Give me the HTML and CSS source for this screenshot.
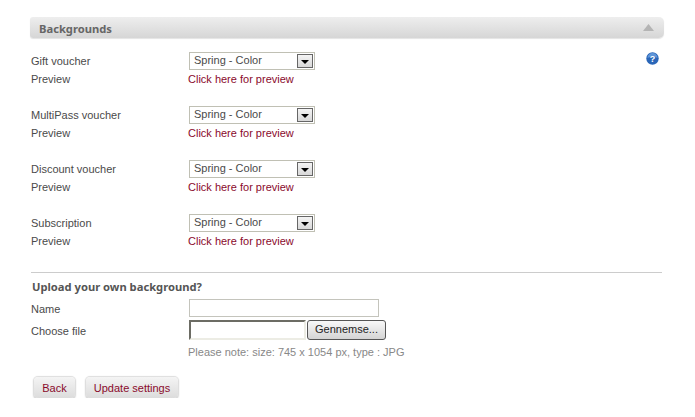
FILE: index.html
```html
<!DOCTYPE html>
<html>
  <head>
    <meta charset="UTF-8">
    <title>Backgrounds</title>
    <link rel="stylesheet" href="styles.css">
  </head>
  <body>
    <div class="section-head">
      <span>Backgrounds</span>
      <svg class="collapse" width="11" height="7" viewBox="0 0 11 7"><path d="M5.5 0 L11 7 L0 7 Z" fill="#b4b4b4"/></svg>
    </div>
    <div class="vouchers">
      <svg class="help" width="13" height="13" viewBox="0 0 13 13">
        <circle cx="6.5" cy="6.5" r="6.2" fill="#2a66b8"/>
        <path d="M1.5 6 A5 5 0 0 1 11.5 6 Q6.5 3.5 1.5 6 Z" fill="#5f95d8"/>
        <text x="6.5" y="10" text-anchor="middle" class="help-mark">?</text>
      </svg>
      <div class="voucher">
        <label>Gift voucher</label>
        <div class="fake-select"><span>Spring - Color</span><i class="arrow"></i></div>
        <label>Preview</label>
        <a href="#">Click here for preview</a>
      </div>
      <div class="voucher">
        <label>MultiPass voucher</label>
        <div class="fake-select"><span>Spring - Color</span><i class="arrow"></i></div>
        <label>Preview</label>
        <a href="#">Click here for preview</a>
      </div>
      <div class="voucher">
        <label>Discount voucher</label>
        <div class="fake-select"><span>Spring - Color</span><i class="arrow"></i></div>
        <label>Preview</label>
        <a href="#">Click here for preview</a>
      </div>
      <div class="voucher">
        <label>Subscription</label>
        <div class="fake-select"><span>Spring - Color</span><i class="arrow"></i></div>
        <label>Preview</label>
        <a href="#">Click here for preview</a>
      </div>
    </div>
    <hr>
    <h3>Upload your own background?</h3>
    <div class="upload">
      <label class="name-label">Name</label>
      <div class="text-input"></div>
      <label class="file-label">Choose file</label>
      <div class="file-row">
        <div class="file-input"></div>
        <div class="browse">Gennemse...</div>
      </div>
      <div></div>
      <p class="note">Please note: size: 745 x 1054 px, type : JPG</p>
    </div>
    <div class="actions">
      <a class="btn btn-back" href="#">Back</a>
      <a class="btn btn-update" href="#">Update settings</a>
    </div>
  </body>
</html>
```

FILE: styles.css
```css
body {
    margin: 0;
    padding: 17px 31px 0 30px;
    background: #fff;
    font-family: "Liberation Sans", sans-serif;
    font-size: 11px;
    color: #4a4a4a;
}
.section-head {
    height: 21px;
    display: flex;
    align-items: center;
    justify-content: space-between;
    padding: 0 10px 0 9px;
    border-radius: 3px 5px 5px 3px;
    background: linear-gradient(#eeeeee, #d6d6d6);
    box-shadow: 0 1px 1px #e4e4e4;
    color: #666;
    font-family: "Noto Sans", sans-serif;
    font-weight: bold;
    font-size: 11.2px;
}
.section-head span {
    padding-top: 2px;
}
.vouchers {
    position: relative;
    padding: 14px 0 0 1px;
}
.help {
    position: absolute;
    top: 14px;
    right: 5px;
}
.help-mark {
    font-family: "Liberation Sans", sans-serif;
    font-size: 9px;
    font-weight: bold;
    fill: #fff;
}
.voucher {
    display: grid;
    grid-template-columns: 158px 1fr;
    grid-auto-rows: 18px;
    align-items: center;
    margin-bottom: 18px;
}
.voucher a {
    color: #8a0a2c;
    text-decoration: none;
    margin-left: -1px;
}
.fake-select {
    width: 126px;
    height: 18px;
    box-sizing: border-box;
    border: 1px solid #c0c0b4;
    display: flex;
    align-items: center;
    justify-content: space-between;
    padding: 0 1px 0 4px;
}
.fake-select span {
    padding-bottom: 2px;
}
.arrow {
    width: 16px;
    height: 14px;
    box-sizing: border-box;
    border: 1px solid #666;
    background: linear-gradient(#f4f4f4, #d8d8d8);
    display: flex;
    align-items: center;
    justify-content: center;
}
.arrow::after {
    content: "";
    margin-top: 2px;
    border-top: 4px solid #000;
    border-left: 4px solid transparent;
    border-right: 4px solid transparent;
}
hr {
    margin: 22px 2px 0 1px;
    border: 0;
    border-top: 1px solid #cccccc;
}
h3 {
    margin: 6px 0 0 2px;
    font-family: "Noto Sans", sans-serif;
    font-size: 11.2px;
    line-height: 15px;
    color: #555;
}
.upload {
    display: grid;
    grid-template-columns: 158px 1fr;
    align-items: center;
    margin: 5px 0 0 1px;
}
.text-input {
    width: 190px;
    height: 18px;
    box-sizing: border-box;
    border: 1px solid #c4c4bc;
}
.name-label {
    padding-top: 2px;
}
.file-label {
    margin-top: 4px;
}
.file-row {
    display: flex;
    align-items: center;
    margin-top: 3px;
}
.file-input {
    width: 117px;
    height: 20px;
    box-sizing: border-box;
    border: 2px solid;
    border-color: #6c6c64 #ecece4 #ecece4 #6c6c64;
}
.browse {
    width: 79px;
    height: 20px;
    margin-left: 1px;
    box-sizing: border-box;
    border: 1px solid #555;
    border-radius: 3px;
    background: linear-gradient(#f8f8f8, #d4d4d4);
    color: #222;
    text-align: center;
    line-height: 17px;
}
.note {
    margin: 3px 0 0 -1px;
    color: #888;
    line-height: 18px;
}
.actions {
    display: flex;
    gap: 11px;
    margin: 16px 0 0 4px;
}
.btn {
    height: 21px;
    line-height: 22px;
    box-sizing: border-box;
    text-align: center;
    border-radius: 4px;
    background: linear-gradient(#f4f4f4, #dcdcdc);
    box-shadow: 0 0 1px 1px #ddd, 0 1px 2px #aaa;
    color: #8a0a2c;
    text-decoration: none;
}
.btn-back {
    width: 41px;
}
.btn-update {
    width: 92px;
}
```
